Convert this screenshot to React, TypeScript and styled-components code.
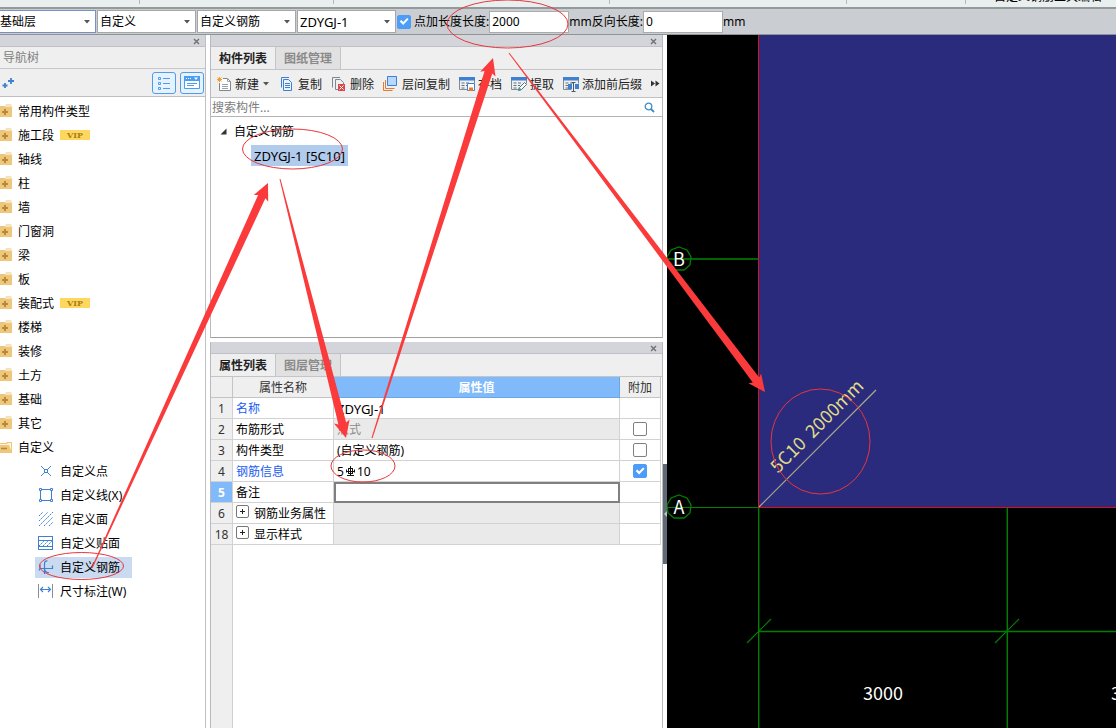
import React from 'react';
import styled, { createGlobalStyle, css } from 'styled-components';

const GlobalStyle = createGlobalStyle`
  *, *::before, *::after { box-sizing: border-box; }
  body {
    margin: 0;
    background: #fff;
    color: #000;
    font: 12px/16px "Noto Sans", "Noto Sans CJK SC", sans-serif;
  }
  button, input, select { font: inherit; color: inherit; margin: 0; }
  ul { list-style: none; margin: 0; padding: 0; }
  svg { display: block; flex: none; }
`;

const Page = styled.div`
  position: relative;
  display: flex;
  flex-direction: column;
  min-height: 100vh;
  overflow: hidden;
`;

const Caption = styled.span`
  padding-top: 2px;
`;

/* ---------- ribbon and option bar ---------- */

const Ribbon = styled.header`
  display: flex;
  height: 7px;
  overflow: hidden;
  background: #e9efee;
`;

const RibbonGroup = styled.div<{ $width: number }>`
  flex: 0 0 ${p => p.$width}px;
  height: 4px;
  border-right: 1px solid #b4baba;
`;

const RibbonCaption = styled.div`
  display: flex;
  align-items: flex-end;
  height: 5px;
  padding-left: 28px;
  white-space: nowrap;
`;

const OptionBar = styled.form`
  display: flex;
  align-items: center;
  height: 28px;
  border-top: 2px solid #949a9a;
  border-bottom: 1px solid #8e9494;
  background: #cacdd1;
  white-space: nowrap;
`;

const SelectBox = styled.span<{ $width: number; $active?: boolean; $latin?: boolean }>`
  display: grid;
  grid-template-columns: 1fr 16px;
  align-items: center;
  flex: 0 0 ${p => p.$width}px;
  height: 23px;
  margin-right: 1px;
  border: 1px solid ${p => (p.$active ? '#7c8fc4' : '#a4a6a8')};
  background: #fff;
  font-size: ${p => (p.$latin ? 13 : 12)}px;

  select {
    grid-area: 1 / 1 / 2 / 3;
    width: 100%;
    height: 21px;
    padding: 0 16px 0 2px;
    border: 0;
    background: none;
    appearance: none;
    outline: none;
  }
  &:first-child select { padding-left: 0; }
  &:first-child { border-left: 0; }
  svg { grid-area: 1 / 2 / 2 / 3; justify-self: center; pointer-events: none; }
`;

const OptionLabel = styled.label`
  display: flex;
  align-items: center;
  gap: 3px;
`;

const NumberField = styled.input`
  width: 80px;
  height: 22px;
  padding: 0 2px;
  border: 1px solid #a9abad;
  background: #fff;
  outline: none;
`;

const CheckBox = styled.input<{ $flush?: boolean }>`
  display: block;
  width: 14px;
  height: 14px;
  margin: ${p => (p.$flush ? '0' : '0 auto')};
  border: 1px solid #808080;
  border-radius: 2px;
  background: #fff;
  appearance: none;

  &:checked { border-color: #4c9cf8; background: #4c9cf8; }
  &:checked::after {
    content: '';
    display: block;
    width: 12px;
    height: 12px;
    background: #fff;
    clip-path: polygon(14% 50%, 28% 38%, 43% 54%, 76% 20%, 88% 32%, 43% 80%);
  }
`;

/* ---------- docked panels ---------- */

const Workspace = styled.main`
  display: flex;
  flex: 1;
`;

const NavPanel = styled.nav`
  display: flex;
  flex-direction: column;
  flex: 0 0 206px;
  border-right: 1px solid #bfc0c6;
`;

const DockBar = styled.div`
  display: flex;
  align-items: center;
  justify-content: flex-end;
  height: 12px;
  padding: 2px 5px 0 0;
  border-bottom: 1px solid #c0c1c6;
  background: #d4d5db;
`;

const CloseButton = styled.button`
  padding: 0;
  border: 0;
  background: none;
`;

const NavTitle = styled.h2`
  height: 22px;
  margin: 0;
  padding-left: 3px;
  border-bottom: 1px solid #c6c7ca;
  background: #efefef;
  color: #808080;
  font-size: 12px;
  font-weight: 400;
  line-height: 22px;
`;

const NavTools = styled.div`
  display: flex;
  align-items: center;
  gap: 4px;
  height: 28px;
  padding: 0 1px 0 2px;
  border-bottom: 1px solid #bfbfc2;
  background: #efefef;
`;

const PlainButton = styled.button`
  margin-right: auto;
  padding: 0;
  border: 0;
  background: none;
`;

const ViewToggle = styled.button`
  display: grid;
  place-items: center;
  width: 24px;
  height: 22px;
  padding: 0;
  border: 1px solid #4c9cf0;
  border-radius: 3px;
  background: #e6f2fd;
`;

const NavTree = styled.ul`
  && { padding-top: 2px; }
`;

const NavRow = styled.li`
  display: flex;
  align-items: center;
  gap: 6px;
  height: 24px;
`;

const VipBadge = styled.span`
  width: 30px;
  height: 10px;
  background: #ffd75e;
  color: #a67c14;
  font: bold 8px/10px "DejaVu Serif", serif;
  text-align: center;
`;

const NavLeaf = styled.button<{ $selected?: boolean }>`
  display: flex;
  align-items: center;
  gap: 6px;
  height: 21px;
  margin-left: 35px;
  padding: 0 12px 0 3px;
  border: 0;
  background: ${p => (p.$selected ? '#c9daf1' : 'none')};
`;

const Dock = styled.div`
  display: flex;
  flex-direction: column;
  gap: 4px;
  flex: 0 0 453px;
  margin-left: 4px;
`;

const Panel = styled.section<{ $grow?: boolean }>`
  display: flex;
  flex-direction: column;
  border: solid #b9babf;
  border-width: 0 1px;
  ${p => (p.$grow ? css`flex: 1;` : css`border-bottom: 1px solid #a0a0a0;`)}
`;

const Tabs = styled.div`
  display: flex;
  height: 23px;
  border-bottom: 1px solid #c4c5c9;
  background: #efefef;
`;

const Tab = styled.button<{ $active?: boolean }>`
  padding: 2px 8px 0;
  border: 0;
  border-right: 1px solid #c4c5c9;
  background: ${p => (p.$active ? '#efefef' : '#e1e1e1')};
  color: ${p => (p.$active ? '#222' : '#8a8a8a')};
  font-weight: 700;
`;

const Toolbar = styled.div`
  display: flex;
  align-items: center;
  gap: 9px;
  height: 28px;
  padding-left: 5px;
  border-bottom: 1px solid #c0c1c4;
  background: #efefef;
`;

const ToolButton = styled.button`
  display: flex;
  align-items: center;
  gap: 3px;
  padding: 0;
  border: 0;
  background: none;
  color: #222;
  white-space: nowrap;
`;

const SearchRow = styled.label`
  display: flex;
  align-items: center;
  height: 19px;
  padding-right: 7px;
  border-bottom: 1px solid #b4b4b4;

  input {
    flex: 1;
    height: 18px;
    padding: 0 1px;
    border: 0;
    background: none;
    outline: none;
  }
  input::placeholder { color: #7c7c7c; opacity: 1; }
`;

const ComponentTree = styled.ul`
  min-height: 220px;
  && { padding-top: 2px; }
`;

const ComponentGroup = styled.li`
  display: flex;
  align-items: center;
  gap: 7px;
  height: 24px;
  padding-left: 9px;
`;

const ComponentItem = styled.li`
  display: flex;
  align-items: center;
  height: 24px;
  padding-left: 40px;

  button {
    height: 21px;
    padding: 1px 3px 0;
    border: 0;
    background: #b1cbed;
    font-size: 13px;
  }
`;

/* ---------- property grid ---------- */

const PropertyArea = styled.div`
  flex: 1;
  padding-right: 1px;
  background: linear-gradient(90deg, #efefef 21px, #cfcfcf 21px, #cfcfcf 22px, #fff 22px);
`;

const PropertyTable = styled.table`
  width: 100%;
  table-layout: fixed;
  border-spacing: 0;

  th, td {
    height: 21px;
    padding: 2px 3px 0;
    border: solid #d2d2d2;
    border-width: 0 1px 1px 0;
    font-weight: 400;
    line-height: 18px;
    text-align: left;
    white-space: nowrap;
  }
  td:last-child { padding-top: 0; }
  thead th { background: #efefef; color: #333; text-align: center; border-color: #c4c4c4; }
  thead th:nth-child(3) {
    border-color: #6aa7ea;
    background: #80bafa;
    color: #fff;
    font-weight: 700;
  }
`;

const IndexCell = styled.td<{ $current?: boolean }>`
  && {
    padding: 2px 0 0;
    background: ${p => (p.$current ? '#80bafa' : '#efefef')};
    color: ${p => (p.$current ? '#fff' : '#333')};
    font-weight: ${p => (p.$current ? 700 : 400)};
    text-align: center;
  }
`;

const NameCell = styled.th<{ $link?: boolean }>`
  color: ${p => (p.$link ? '#1a5cf0' : '#000')};
`;

const ExpandButton = styled.button`
  display: inline-grid;
  place-items: center;
  width: 13px;
  height: 13px;
  margin: 0 5px 0 0;
  padding: 0;
  border: 1px solid #777;
  border-radius: 2px;
  background: #fff;
  vertical-align: top;
`;

const ValueCell = styled.td<{
  $shade?: boolean;
  $muted?: boolean;
  $flush?: boolean;
  $latin?: boolean;
}>`
  ${p => p.$shade && css`background: #eaeaea;`}
  ${p => p.$muted && css`color: #8c8c8c;`}
  ${p => p.$latin && css`font-size: 13px;`}
  && { ${p => p.$flush && css`padding: 0; border-width: 0;`} }
`;

const RebarText = styled.span`
  display: flex;
  align-items: center;
  gap: 1px;
  line-height: 16px;
`;

const CellEditor = styled.input`
  display: block;
  width: 100%;
  height: 21px;
  border: 2px solid #808080;
  background: #fff;
  outline: none;
`;

/* ---------- drawing area ---------- */

const Splitter = styled.div`
  flex: 0 0 4px;
`;

const SplitterHandle = styled.button`
  display: grid;
  place-items: center;
  width: 4px;
  height: 100px;
  margin-top: 429px;
  padding: 0;
  border: 0;
  background: #5f6a74;
`;

const Viewport = styled.section`
  flex: 1;
  min-width: 0;
  display: grid;
  overflow: hidden;
  background: #000;

  svg { width: 100%; height: 100%; }
  text { font-family: "Noto Sans CJK SC", sans-serif; font-size: 18px; fill: #fff; }
`;

const BarLabel = styled.text`
  && { fill: #e0de86; }
`;

const Markup = styled.svg`
  position: absolute;
  inset: 0;
  width: 100%;
  height: 100%;
  pointer-events: none;
`;

/* ---------- icons ---------- */

const Caret = () => (
  <svg width="8" height="5" viewBox="0 0 8 5"><path d="M1 1h6L4 4.4z" fill="#555" /></svg>
);

const CloseIcon = () => (
  <svg width="7" height="7" viewBox="0 0 7 7">
    <path d="M1 1l5 5M6 1L1 6" stroke="#707070" strokeWidth="1.4" />
  </svg>
);

const FolderClosed = () => (
  <svg width="12" height="14" viewBox="0 0 12 14">
    <path d="M5 1.500l1-1h5l1 1zM0 2h5v.5h7V13H0z" fill="#eec67c" />
    <path d="M5 5v6M2 8h6" stroke="#b98a35" strokeWidth="2" />
  </svg>
);

const FolderOpen = () => (
  <svg width="12" height="14" viewBox="0 0 12 14">
    <path d="M0 3h6l1-1h5v11H0z" fill="#eec67c" />
    <path d="M0 4h7l1-1h3v7L9 5H0z" fill="#fff3da" />
    <path d="M1 8.5h6" stroke="#b98a35" strokeWidth="1.6" />
  </svg>
);

const blue = '#3f80d0';

const leafIcons: Record<string, React.ReactNode> = {
  point: (
    <g fill="none" stroke={blue}>
      <path d="M3 3l4 4M13 3L9 7M3 13l4-4M13 13L9 9" />
      <rect x="6.5" y="6.5" width="3" height="3" />
    </g>
  ),
  line: (
    <g fill="none" stroke={blue}>
      <path d="M4 2.500h8M4 13.500h8M2.500 4v8M13.500 4v8" />
      <path d="M1.500 1.500h2v2h-2zM12.500 1.500h2v2h-2zM1.500 12.500h2v2h-2zM12.500 12.500h2v2h-2z" />
    </g>
  ),
  face: (
    <path
      d="M1 5l4-4M1 10l9-9M1 15L15 1M6 15l9-9M11 15l4-4"
      stroke={blue}
      strokeDasharray="2 1"
      fill="none"
    />
  ),
  overlay: (
    <g fill="none" stroke={blue}>
      <rect x="0.500" y="1.500" width="14" height="13" />
      <path d="M0 5.500h15M0 11.500h15" />
      <path d="M1 11l5-5M5 11l5-5M9 11l5-5" strokeDasharray="2 1" />
    </g>
  ),
  rebar: (
    <path
      d="M6.500 15V5Q6.500 1.500 9.500 2M2 5.500V9.500H14.500V6.500M6.500 9.500Q7 14 11 13.500M2 9.500l-1 2"
      stroke={blue}
      strokeWidth="1.200"
      fill="none"
    />
  ),
  dimension: (
    <g fill="none">
      <path d="M0.500 1v14M14.500 1v14" stroke="#8a9096" />
      <path d="M3 6.500h9M5 4L2.500 6.500 5 9M10 4l2.500 2.500L10 9" stroke={blue} strokeWidth="1.200" />
    </g>
  ),
};

const LeafIcon = ({ name }: { name: string }) => (
  <svg width="16" height="16" viewBox="0 0 16 16">{leafIcons[name]}</svg>
);

const GridBase = () => (
  <>
    <path d="M0.500 3v10.500h8M0.500 1.500h15v6" stroke="#7f8c96" fill="none" />
    <path d="M0 1h16v3.500H0z" fill={blue} />
    <path d="M2.500 7h3M7 7h3M2.500 9.500h3M7 9.500h2M2.500 12h3" stroke="#62717d" />
  </>
);

const toolIcons: Record<string, React.ReactNode> = {
  create: (
    <>
      <path d="M3.500 7v7.500h11V5.500l-3-3H7" stroke="#7d8790" fill="#fff" />
      <path d="M11.500 2.500v3h3M6 8.500h6M6 10.500h6M6 12.500h6" stroke="#9aa3aa" fill="none" />
      <path d="M1.500 1.500l4 4M5.500 1.500l-4 4M3.500 1v5M1 3.500h5" stroke="#f0a030" />
    </>
  ),
  copy: (
    <g fill="none" stroke={blue}>
      <path d="M10 1.500H2.500v10" />
      <path d="M4.500 3.500h5l3 3v8h-8z" fill="#eaf3fd" />
      <path d="M6 7.500h5M6 9.500h5M6 11.500h5" />
    </g>
  ),
  remove: (
    <>
      <path d="M9 1.500H1.500v10" stroke="#7d8790" fill="none" />
      <path d="M7 13.500H4.500v-10h5l3 3V8" stroke="#7d8790" fill="none" />
      <path d="M7 8h7v7H7z" fill="#d9474a" />
      <path d="M8.500 9.500l4 4M12.500 9.500l-4 4" stroke="#fff" />
    </>
  ),
  layers: (
    <>
      <path d="M0.500 6v8.500h9M2.500 4v8.500h9" stroke="#e77a2c" fill="none" />
      <path d="M4.500 0.500h9v9h-9z" fill="#b8d8ff" stroke={blue} />
    </>
  ),
  archive: (
    <>
      <GridBase />
      <path d="M8.500 7.500h7v7h-7z" fill="#fff" stroke={blue} />
      <path d="M10 11.500h4V15h-4z" fill="#e77a2c" />
    </>
  ),
  extract: (
    <>
      <GridBase />
      <path d="M7.500 14.500l1-3 5-5 2 2-5 5z" fill="#fff" stroke="#5d6a74" />
      <path d="M7 15l1-4 3 3z" fill="#38a3a5" />
    </>
  ),
  affix: (
    <>
      <GridBase />
      <path d="M5 8h4v5H5zM12 8h4v5h-4z" fill={blue} />
      <path d="M8.500 6.500h4M10.500 6.500v9M8.500 15.500h4" stroke="#4a5a68" />
    </>
  ),
};

const ToolIcon = ({ name }: { name: string }) => (
  <svg width="16" height="16" viewBox="0 0 16 16">{toolIcons[name]}</svg>
);

/* ---------- data ---------- */

const categories = [
  { label: '常用构件类型' },
  { label: '施工段', vip: true },
  { label: '轴线' },
  { label: '柱' },
  { label: '墙' },
  { label: '门窗洞' },
  { label: '梁' },
  { label: '板' },
  { label: '装配式', vip: true },
  { label: '楼梯' },
  { label: '装修' },
  { label: '土方' },
  { label: '基础' },
  { label: '其它' },
  { label: '自定义', open: true },
];

const leaves = [
  { icon: 'point', label: '自定义点' },
  { icon: 'line', label: '自定义线(X)' },
  { icon: 'face', label: '自定义面' },
  { icon: 'overlay', label: '自定义贴面' },
  { icon: 'rebar', label: '自定义钢筋', selected: true },
  { icon: 'dimension', label: '尺寸标注(W)' },
];

const tools = [
  { icon: 'create', label: '新建', menu: true },
  { icon: 'copy', label: '复制' },
  { icon: 'remove', label: '删除' },
  { icon: 'layers', label: '层间复制' },
  { icon: 'archive', label: '存档' },
  { icon: 'extract', label: '提取' },
  { icon: 'affix', label: '添加前后缀' },
];

const ribbonGroups = [140, 194, 276, 237, 119];

const selects = [
  { label: '楼层', value: '基础层', width: 96, active: true },
  { label: '类别', value: '自定义', width: 99 },
  { label: '类型', value: '自定义钢筋', width: 99 },
  { label: '构件', value: 'ZDYGJ-1', width: 99, latin: true },
];

type Point = [number, number];

const arrows: { from: Point; to: Point }[] = [
  { from: [92, 568], to: [268, 183] },
  { from: [280, 179], to: [346, 438] },
  { from: [372, 438], to: [493, 58] },
  { from: [509, 53], to: [765, 392] },
];

const rings = [
  { cx: 507.5, cy: 24, rx: 60.5, ry: 24 },
  { cx: 292.5, cy: 149, rx: 50, ry: 20 },
  { cx: 81.5, cy: 566, rx: 42, ry: 13.5 },
  { cx: 363, cy: 466, rx: 32, ry: 16 },
  { cx: 820.5, cy: 441.5, rx: 49.5, ry: 52.5 },
];

/** Outline of an arrow that starts as a point and widens up to its head. */
function arrowOutline([x1, y1]: Point, [x2, y2]: Point) {
  const length = Math.hypot(x2 - x1, y2 - y1);
  const ux = (x2 - x1) / length;
  const uy = (y2 - y1) / length;
  const at = (back: number, side: number) =>
    `${(x2 - ux * back - uy * side).toFixed(1)},${(y2 - uy * back + ux * side).toFixed(1)}`;
  return [
    at(length, 0.5), at(15, 4), at(17, 8), at(0, 0), at(17, -8), at(15, -4), at(length, -0.5),
  ].join(' ');
}

/* ---------- sections ---------- */

const PanelBar = () => (
  <DockBar>
    <CloseButton type="button" aria-label="关闭"><CloseIcon /></CloseButton>
  </DockBar>
);

const Navigation = () => (
  <NavPanel>
    <PanelBar />
    <NavTitle>导航树</NavTitle>
    <NavTools>
      <PlainButton type="button" aria-label="展开">
        <svg width="13" height="12" viewBox="0 0 13 12">
          <path d="M9 1v6M6 4h6M3 6v5M0.500 8.500h5" stroke={blue} strokeWidth="1.800" />
        </svg>
      </PlainButton>
      <ViewToggle type="button" aria-label="列表">
        <svg width="14" height="14" viewBox="0 0 14 14">
          <path d="M1.500 1.500h2v2h-2zM1.500 6.500h2v2h-2zM1.500 11.500h2v2h-2z" stroke="#4c9cf0" fill="none" />
          <path d="M6 2.500h7M6 7.500h7M6 12.500h7" stroke="#4c9cf0" />
        </svg>
      </ViewToggle>
      <ViewToggle type="button" aria-label="窗口">
        <svg width="16" height="14" viewBox="0 0 16 14">
          <path d="M0.500 0.500h15v12h-15z" stroke="#4c9cf0" fill="#fff" />
          <path d="M0 0h16v5H0z" fill="#4c9cf0" />
          <path d="M2 2.500h1M4 2.500h1M6 2.500h1" stroke="#fff" />
          <path d="M10 1.500h4L12 4z" fill="#fff" />
          <path d="M3 7.500h10M3 9.500h7" stroke="#4c9cf0" />
        </svg>
      </ViewToggle>
    </NavTools>
    <NavTree>
      {categories.map(c => (
        <NavRow key={c.label}>
          {c.open ? <FolderOpen /> : <FolderClosed />}
          <Caption>{c.label}</Caption>
          {c.vip && <VipBadge>VIP</VipBadge>}
        </NavRow>
      ))}
      {leaves.map(l => (
        <NavRow key={l.label}>
          <NavLeaf type="button" $selected={l.selected}>
            <LeafIcon name={l.icon} />
            <Caption>{l.label}</Caption>
          </NavLeaf>
        </NavRow>
      ))}
    </NavTree>
  </NavPanel>
);

const ComponentPanel = () => (
  <Panel>
    <PanelBar />
    <Tabs>
      <Tab type="button" $active>构件列表</Tab>
      <Tab type="button">图纸管理</Tab>
    </Tabs>
    <Toolbar>
      {tools.map(t => (
        <ToolButton key={t.label} type="button">
          <ToolIcon name={t.icon} />
          <Caption>{t.label}</Caption>
          {t.menu && <Caret />}
        </ToolButton>
      ))}
      <ToolButton type="button" aria-label="更多">
        <svg width="9" height="7" viewBox="0 0 9 7">
          <path d="M0 0.500l4 3-4 3zM4.500 0.500l4 3-4 3z" fill="#333" />
        </svg>
      </ToolButton>
    </Toolbar>
    <SearchRow>
      <input type="text" aria-label="搜索构件" placeholder="搜索构件..." />
      <svg width="11" height="11" viewBox="0 0 11 11">
        <circle cx="4.500" cy="4.500" r="3.300" fill="none" stroke="#3a8fc8" strokeWidth="1.300" />
        <path d="M7 7l3 3" stroke="#3a8fc8" strokeWidth="1.800" />
      </svg>
    </SearchRow>
    <ComponentTree>
      <ComponentGroup>
        <svg width="7" height="7" viewBox="0 0 7 7"><path d="M6.500 0.500v6h-6z" fill="#333" /></svg>
        <Caption>自定义钢筋</Caption>
      </ComponentGroup>
      <ComponentItem><button type="button">ZDYGJ-1 [5C10]</button></ComponentItem>
    </ComponentTree>
  </Panel>
);

const Expander = () => (
  <ExpandButton type="button" aria-label="展开">
    <svg width="7" height="7" viewBox="0 0 7 7"><path d="M3.500 1v5M1 3.500h5" stroke="#222" /></svg>
  </ExpandButton>
);

const PropertyPanel = () => (
  <Panel $grow>
    <PanelBar />
    <Tabs>
      <Tab type="button" $active>属性列表</Tab>
      <Tab type="button">图层管理</Tab>
    </Tabs>
    <PropertyArea>
      <PropertyTable>
        <colgroup>
          <col width="22" /><col width="101" /><col /><col width="41" />
        </colgroup>
        <thead>
          <tr><th aria-label="序号" /><th>属性名称</th><th>属性值</th><th>附加</th></tr>
        </thead>
        <tbody>
          <tr>
            <IndexCell>1</IndexCell><NameCell $link>名称</NameCell>
            <ValueCell $latin>ZDYGJ-1</ValueCell><td />
          </tr>
          <tr>
            <IndexCell>2</IndexCell><NameCell>布筋形式</NameCell>
            <ValueCell $shade $muted>点式</ValueCell>
            <td><CheckBox type="checkbox" aria-label="附加布筋形式" /></td>
          </tr>
          <tr>
            <IndexCell>3</IndexCell><NameCell>构件类型</NameCell>
            <ValueCell>(自定义钢筋)</ValueCell>
            <td><CheckBox type="checkbox" aria-label="附加构件类型" /></td>
          </tr>
          <tr>
            <IndexCell>4</IndexCell><NameCell $link>钢筋信息</NameCell>
            <ValueCell>
              <RebarText>
                5
                <svg width="11" height="14" viewBox="0 0 11 14" role="img" aria-label="三级钢">
                  <path
                    d="M5.500 1v9.500M3.500 3v6M7.500 3v6M3 3.500h5M1.500 4.500v3M9.500 4.500v3M1 6.500h9M3 8.500h5M2 10.500h7"
                    stroke="#111"
                    fill="none"
                  />
                </svg>
                10
              </RebarText>
            </ValueCell>
            <td><CheckBox type="checkbox" defaultChecked aria-label="附加钢筋信息" /></td>
          </tr>
          <tr>
            <IndexCell $current>5</IndexCell><NameCell>备注</NameCell>
            <ValueCell $flush><CellEditor type="text" aria-label="备注" /></ValueCell><td />
          </tr>
          <tr>
            <IndexCell>6</IndexCell><NameCell><Expander />钢筋业务属性</NameCell>
            <ValueCell $shade /><td />
          </tr>
          <tr>
            <IndexCell>18</IndexCell><NameCell><Expander />显示样式</NameCell>
            <ValueCell $shade /><td />
          </tr>
        </tbody>
      </PropertyTable>
    </PropertyArea>
  </Panel>
);

const AxisBubble = ({ y, name }: { y: number; name: string }) => (
  <g>
    <polygon
      points="12,-12 20,-9 24,-2 23,6 17,11 7,11 1,6 0,-2 4,-9"
      transform={`translate(0 ${y})`}
      fill="none"
      stroke="#008000"
      strokeWidth="1.3"
    />
    <text x="12" y={y + 7} textAnchor="middle">{name}</text>
  </g>
);

const Drawing = () => (
  <Viewport aria-label="绘图区">
    <svg>
      <rect x="92" y="0" width="100%" height="472" fill="#2b2b7d" />
      <g stroke="#008000">
        <path d="M0 224h91" stroke="#006400" strokeWidth="2" />
        <path d="M0 472.500h91M80 608l24-24M328 608l24-24" strokeWidth="1.200" />
        <line x1="92" y1="596.500" x2="100%" y2="596.500" strokeWidth="1.300" />
        <line x1="91.700" y1="473" x2="91.700" y2="100%" strokeWidth="1.400" />
        <line x1="340.300" y1="473" x2="340.300" y2="100%" strokeWidth="1.400" />
      </g>
      <line x1="91.500" y1="0" x2="91.500" y2="473" stroke="#d8101c" />
      <line x1="91" y1="472.500" x2="100%" y2="472.500" stroke="#d8101c" />
      <line x1="92" y1="472" x2="209" y2="355" stroke="#a9a98c" strokeWidth="1.200" />
      <BarLabel transform="translate(111 439) rotate(-45)">{'5C10\u00a0 2000mm'}</BarLabel>
      <AxisBubble y={224} name="B" />
      <AxisBubble y={472} name="A" />
      <text x="196" y="665">3000</text>
      <text x="444" y="665">3000</text>
    </svg>
  </Viewport>
);

export default function App() {
  return (
    <>
      <GlobalStyle />
      <Page>
        <Ribbon>
          {ribbonGroups.map((w, i) => <RibbonGroup key={i} $width={w} />)}
          <RibbonCaption>自定义钢筋工具编辑</RibbonCaption>
        </Ribbon>
        <OptionBar>
          {selects.map(s => (
            <SelectBox key={s.label} $width={s.width} $active={s.active} $latin={s.latin}>
              <select aria-label={s.label} defaultValue={s.value}><option>{s.value}</option></select>
              <Caret />
            </SelectBox>
          ))}
          <OptionLabel>
            <CheckBox $flush type="checkbox" defaultChecked />
            点加长度
          </OptionLabel>
          <label htmlFor="forward">长度:</label>
          <NumberField id="forward" type="text" defaultValue="2000" />
          <label htmlFor="reverse">mm反向长度:</label>
          <NumberField id="reverse" type="text" defaultValue="0" />
          mm
        </OptionBar>
        <Workspace>
          <Navigation />
          <Dock>
            <ComponentPanel />
            <PropertyPanel />
          </Dock>
          <Splitter>
            <SplitterHandle type="button" aria-label="折叠面板">
              <svg width="3" height="6" viewBox="0 0 3 6"><path d="M3 0v6L0 3z" fill="#c0c4c8" /></svg>
            </SplitterHandle>
          </Splitter>
          <Drawing />
        </Workspace>
        <Markup>
          <g fill="#fb3b3b">
            {arrows.map((a, i) => <polygon key={i} points={arrowOutline(a.from, a.to)} />)}
          </g>
          <g fill="none" stroke="#e8363c" strokeWidth="1">
            {rings.map((r, i) => <ellipse key={i} {...r} />)}
          </g>
        </Markup>
      </Page>
    </>
  );
}
